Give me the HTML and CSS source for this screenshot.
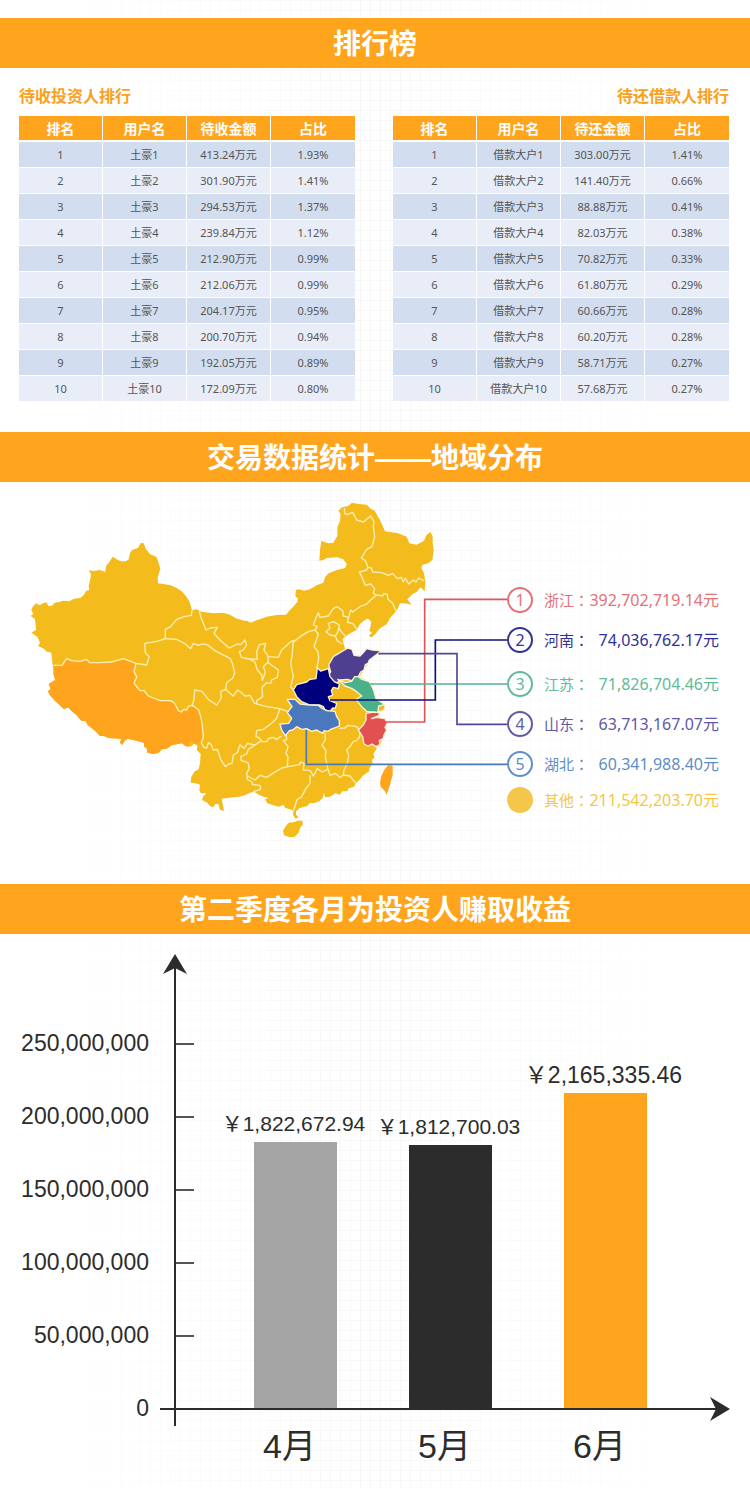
FILE: index.html
```html
<!DOCTYPE html>
<html lang="zh-CN">
<head>
<meta charset="utf-8">
<meta name="viewport" content="width=device-width, initial-scale=1">
<title>排行榜</title>
<link rel="stylesheet" href="styles.css">
</head>
<body>
<main class="report">
  <h2 class="banner">排行榜</h2>
  <section class="rankings">
    <div class="ranking">
      <h3 class="ranking-title" id="investors">待收投资人排行</h3>
      <table class="rank-table" aria-labelledby="investors">
        <thead><tr><th>排名</th><th>用户名</th><th>待收金额</th><th>占比</th></tr></thead>
        <tbody>
          <tr><td>1</td><td>土豪1</td><td>413.24万元</td><td>1.93%</td></tr>
          <tr><td>2</td><td>土豪2</td><td>301.90万元</td><td>1.41%</td></tr>
          <tr><td>3</td><td>土豪3</td><td>294.53万元</td><td>1.37%</td></tr>
          <tr><td>4</td><td>土豪4</td><td>239.84万元</td><td>1.12%</td></tr>
          <tr><td>5</td><td>土豪5</td><td>212.90万元</td><td>0.99%</td></tr>
          <tr><td>6</td><td>土豪6</td><td>212.06万元</td><td>0.99%</td></tr>
          <tr><td>7</td><td>土豪7</td><td>204.17万元</td><td>0.95%</td></tr>
          <tr><td>8</td><td>土豪8</td><td>200.70万元</td><td>0.94%</td></tr>
          <tr><td>9</td><td>土豪9</td><td>192.05万元</td><td>0.89%</td></tr>
          <tr><td>10</td><td>土豪10</td><td>172.09万元</td><td>0.80%</td></tr>
        </tbody>
      </table>
    </div>
    <div class="ranking">
      <h3 class="ranking-title ranking-title-end" id="borrowers">待还借款人排行</h3>
      <table class="rank-table" aria-labelledby="borrowers">
        <thead><tr><th>排名</th><th>用户名</th><th>待还金额</th><th>占比</th></tr></thead>
        <tbody>
          <tr><td>1</td><td>借款大户1</td><td>303.00万元</td><td>1.41%</td></tr>
          <tr><td>2</td><td>借款大户2</td><td>141.40万元</td><td>0.66%</td></tr>
          <tr><td>3</td><td>借款大户3</td><td>88.88万元</td><td>0.41%</td></tr>
          <tr><td>4</td><td>借款大户4</td><td>82.03万元</td><td>0.38%</td></tr>
          <tr><td>5</td><td>借款大户5</td><td>70.82万元</td><td>0.33%</td></tr>
          <tr><td>6</td><td>借款大户6</td><td>61.80万元</td><td>0.29%</td></tr>
          <tr><td>7</td><td>借款大户7</td><td>60.66万元</td><td>0.28%</td></tr>
          <tr><td>8</td><td>借款大户8</td><td>60.20万元</td><td>0.28%</td></tr>
          <tr><td>9</td><td>借款大户9</td><td>58.71万元</td><td>0.27%</td></tr>
          <tr><td>10</td><td>借款大户10</td><td>57.68万元</td><td>0.27%</td></tr>
        </tbody>
      </table>
    </div>
  </section>

  <h2 class="banner">交易数据统计<span class="dash">——</span>地域分布</h2>
  <section class="regions">
    <svg class="map" viewBox="0 0 1521 1080" role="img" aria-label="地域分布">
      <!-- mainland -->
      <path class="land" d="M92 378L100 372 94 360 98 350 108 340 120 346 128 340 140 337 145 348 156 347 164 338 178 336 190 332 208 334 220 327 242 323 252 314 258 303 268 300 266 288 272 262 273 252 266 241 280 243 300 240 316 246 318 228 328 216 338 200 350 208 362 214 378 214 386 208 390 190 396 180 414 174 422 160 430 158 438 178 450 192 470 202 476 220 481 236 473 262 474 280 490 282 512 286 530 294 545 304 558 318 568 334 576 360 590 358 604 365 640 370 668 368 690 374 708 385 735 393 741 392 752 398 772 390 800 380 830 375 858 374 868 362 880 350 892 335 894 326 886 318 888 300 896 298 912 302 930 298 950 286 970 278 976 260 986 250 1010 240 1036 234 1040 222 1030 208 1012 202 980 204 970 210 958 212 960 180 964 153 985 160 1000 158 1012 138 1012 112 1020 92 1022 72 1015 62 1026 52 1044 48 1056 38 1076 42 1100 44 1112 56 1124 62 1140 90 1155 124 1195 130 1220 140 1228 160 1250 164 1272 152 1280 134 1292 126 1298 140 1298 160 1301 180 1297 210 1285 220 1268 224 1264 234 1272 250 1276 276 1274 304 1262 292 1250 306 1238 312 1222 328 1234 344 1214 340 1200 340 1190 362 1170 384 1160 403 1140 415 1128 430 1116 442 1106 438 1116 428 1108 422 1112 408 1114 396 1108 388 1100 386 1090 394 1080 402 1070 420 1050 430 1036 440 1028 446 1030 460 1036 478 1056 478 1062 496 1085 498 1100 478 1120 490 1092 540 1078 560 1108 575 1128 626 1155 645 1150 662 1136 668 1138 676 1115 685 1150 690 1155 715 1150 735 1140 768 1128 768 1130 776 1120 792 1124 802 1116 810 1118 822 1108 834 1108 844 1090 856 1080 868 1068 880 1062 890 1046 895 1042 904 1026 904 1020 914 1006 910 990 920 975 922 972 908 968 924 958 934 940 940 930 938 922 948 900 954 888 964 888 974 896 982 886 986 879 974 880 962 870 958 856 954 850 944 836 950 820 946 802 940 795 928 806 924 790 920 780 916 762 905 750 908 735 916 718 920 700 922 682 924 665 926 668 942 672 962 660 960 655 942 646 942 640 952 630 948 622 938 606 930 610 918 620 910 602 910 598 900 600 884 586 880 572 878 574 860 584 844 596 838 600 820 602 792 590 780 592 770 586 758 572 770 545 760 515 766 500 776 485 778 476 788 460 792 442 788 440 774 432 770 432 758 415 754 400 750 384 746 376 750 366 765 360 758 364 746 325 744 312 738 300 738 285 722 272 712 262 704 258 694 244 692 230 676 214 662 205 652 192 658 182 648 166 634 150 616 144 604 152 596 146 582 166 570 160 552 164 540 158 526 154 488 138 484 132 476 114 468 120 458 112 440 94 428 108 420 106 396 104 386Z"/>
      <path class="land" d="M856 1010L866 998 884 996 892 992 908 992 908 1004 900 1014 896 1028 884 1040 870 1042 852 1036 849 1022Z"/>
      <path class="west" d="M160 526L186 526 200 506 215 512 240 514 260 508 268 518 300 518 335 516 370 506 408 520 402 545 410 560 402 580 420 602 432 602 445 618 480 632 512 632 524 640 535 662 544 666 552 658 560 660 564 650 576 650 580 645 596 660 602 680 606 700 610 740 600 756 586 764 578 752 568 756 566 772 556 768 545 760 515 766 500 776 485 778 476 788 460 792 442 788 440 774 432 770 432 758 415 754 400 750 384 746 376 750 366 765 360 758 364 746 325 744 312 738 300 738 285 722 272 712 262 704 258 694 244 692 230 676 214 662 205 652 192 658 182 648 166 634 150 616 144 604 152 596 146 582 166 570 160 552Z"/>
      <path class="west" d="M1165 825L1178 827 1178 855 1170 884 1160 914 1154 902 1142 890 1140 878 1144 858 1154 838Z"/>
      <!-- provincial borders -->
      <g class="borders">
        <path d="M160 526L186 526 200 506 215 512 240 514 260 508 268 518 300 518 335 516 370 506 408 520 440 525 448 500 436 488 434 460 470 454 496 446 496 418 512 410 530 388 552 380 574 376 576 360"/>
        <path d="M496 446L530 448 556 462 572 476 580 460 596 466 606 462 622 464 645 482 660 490 690 505 697 520 704 548 698 565 680 578 677 598 662 604 664 624 650 645 625 628 606 604 584 600 582 628 576 650"/>
        <path d="M408 520L402 545 410 560 402 580 420 602 432 602 445 618 480 632 512 632 524 640 535 662 544 666 552 658 560 660 564 650 576 645 596 660 602 680 606 700 610 740 604 758"/>
        <path d="M598 364L604 385 618 420 630 414 652 412 642 430 660 450 676 464 688 474 712 462 722 464 735 450 740 465 730 480 718 485 724 502 745 506 765 516 772 540 785 555 787 572 796 545 790 530 805 515 804 498 792 480 797 460 778 464 770 485 772 508 735 506"/>
        <path d="M677 598L690 610 700 618 712 600 722 606 735 618 750 616 764 640 800 650 838 656 862 664"/>
        <path d="M805 518L835 540 832 562 815 570 812 580 800 578 786 592 788 620 770 632 770 642"/>
        <path d="M804 500L835 502 845 480 872 455 885 450M872 455L880 452 876 500 872 520 880 560 872 590 880 600"/>
        <path d="M882 455L900 440 925 425 945 420 952 410 940 405 945 390 955 368 960 382 985 378 1000 355 1012 350 1028 362 1030 378 1046 382 1052 360 1058 366 1080 350 1100 342 1112 330 1130 315 1120 310 1124 296 1112 282 1096 286 1086 262 1078 246 1100 240 1104 232"/>
        <path d="M945 420L955 432 942 470 954 485 956 505 950 535M1046 382L1042 396 1060 402 1070 418"/>
        <path d="M985 400L1000 395 1018 405 1014 425 1006 438 990 435 978 425 990 415ZM1016 412L1024 425 1036 438M1006 438L1012 452 1026 462"/>
        <path d="M1033 54L1034 70 1042 74 1058 67 1070 90 1090 96 1100 88 1112 78 1122 95 1120 110 1124 140 1116 170 1100 178 1084 204 1096 212 1104 232 1114 234 1118 246 1145 248 1165 256 1178 250 1192 266 1204 262 1210 276 1216 264 1226 282 1240 270 1248 276 1256 264 1272 272"/>
        <path d="M1130 315L1148 318 1152 310 1162 314 1164 328 1178 340 1188 364"/>
        <path d="M604 758L612 772 620 774 625 758 634 764 640 780 652 778 662 808 676 830 686 822 696 820 700 795 712 788 720 765 732 775 742 760 765 765 785 752 775 742 768 740 770 722 790 718 808 705 828 688 840 656"/>
        <path d="M785 755L800 755 806 745 820 742 830 748 844 738M765 765L745 778 740 792 722 800 724 812 744 818 748 835 740 850 742 868 756 876 758 884 780 886 782 898 760 905"/>
        <path d="M742 858L765 870 780 856 800 862 822 848 845 834 864 830 898 824 902 816 912 820 910 840 930 842M858 728L860 748 850 752 864 770 858 790 864 800 862 828"/>
        <path d="M975 728L976 750 966 765 978 782 976 800 984 838 966 846 952 836 940 858 930 840M930 856L930 880 918 895 905 920 890 930 886 946 880 962"/>
        <path d="M984 838L990 856 1006 850 1020 862 1030 855 1050 858 1068 880M1030 855L1032 840 1042 820 1046 796 1040 780 1054 765 1058 756 1072 750 1080 738 1078 720M1018 715L1035 714 1044 706 1070 710 1078 720"/>
      </g>
      <!-- highlighted provinces -->
      <path class="area shandong" d="M1036 478L1044 474 1056 478 1062 496 1080 498 1088 490 1100 476 1118 480 1142 482 1132 492 1108 510 1104 520 1096 524 1092 540 1082 546 1075 560 1055 572 1042 568 1020 570 1012 578 1000 576 982 562 992 545 986 525 1000 500 1020 488Z"/>
      <path class="area henan" d="M952 533L962 543 985 536 990 560 1004 576 1018 582 1015 596 1000 592 994 602 998 616 985 620 990 632 1010 640 1006 655 998 654 990 664 975 660 970 650 960 645 930 645 905 635 890 620 880 600 890 584 920 576 930 568 948 566Z"/>
      <path class="area jiangsu" d="M1013 568L1035 578 1055 574 1064 560 1075 560 1084 567 1108 575 1120 598 1128 626 1152 642 1148 655 1130 668 1100 664 1085 650 1068 628 1085 618 1070 605 1055 595 1035 588Z"/>
      <path class="area hubei" d="M861 628L885 628 900 642 930 645 955 646 964 654 980 662 1005 664 1010 680 1018 692 1018 708 992 718 985 724 972 722 968 730 950 720 935 724 920 716 905 718 890 710 878 720 868 722 856 737 845 720 840 702 866 700 875 685 862 668 876 650Z"/>
      <path class="area zhejiang" d="M1098 670L1120 666 1137 668 1138 676 1115 686 1130 682 1155 686 1162 700 1155 712 1160 720 1152 735 1150 745 1138 752 1140 764 1128 770 1116 762 1104 768 1092 762 1088 740 1075 720 1090 705 1098 690Z"/>
      <path class="area shanghai" d="M1136 648L1154 644 1155 656 1146 664 1134 664Z"/>
      <!-- leader lines -->
      <g class="leaders">
        <path class="red" d="M1150 696H1274V328H1521"/>
        <path class="navy" d="M990 630H1306V450H1521"/>
        <path class="green" d="M1110 582H1521"/>
        <path class="violet" d="M1135 491H1371V703H1521"/>
        <path class="blue" d="M919 720V823H1521"/>
      </g>
    </svg>
    <ul class="legend">
      <li class="entry c1"><span class="badge">1</span><span>浙江<span class="colon" lang="zh-Hant">：</span></span><span class="amount">392,702,719.14元</span></li>
      <li class="entry c2"><span class="badge">2</span><span>河南<span class="colon" lang="zh-Hant">：</span></span><span class="amount">74,036,762.17元</span></li>
      <li class="entry c3"><span class="badge">3</span><span>江苏<span class="colon" lang="zh-Hant">：</span></span><span class="amount">71,826,704.46元</span></li>
      <li class="entry c4"><span class="badge">4</span><span>山东<span class="colon" lang="zh-Hant">：</span></span><span class="amount">63,713,167.07元</span></li>
      <li class="entry c5"><span class="badge">5</span><span>湖北<span class="colon" lang="zh-Hant">：</span></span><span class="amount">60,341,988.40元</span></li>
      <li class="entry c6"><span class="badge badge-solid"></span><span>其他<span class="colon" lang="zh-Hant">：</span></span><span class="amount">211,542,203.70元</span></li>
    </ul>
  </section>

  <h2 class="banner">第二季度各月为投资人赚取收益</h2>
  <section class="chart">
    <ul class="scale">
      <li class="step"><span>250,000,000</span><i class="tick"></i></li>
      <li class="step"><span>200,000,000</span><i class="tick"></i></li>
      <li class="step"><span>150,000,000</span><i class="tick"></i></li>
      <li class="step"><span>100,000,000</span><i class="tick"></i></li>
      <li class="step"><span>50,000,000</span><i class="tick"></i></li>
      <li class="step"><span>0</span></li>
    </ul>
    <div class="plot">
      <div class="bars">
        <div class="column"><span class="value">￥1,822,672.94</span><div class="bar gray" style="height:267px"></div></div>
        <div class="column"><span class="value">￥1,812,700.03</span><div class="bar dark" style="height:264px"></div></div>
        <div class="column"><span class="value value-large">￥2,165,335.46</span><div class="bar orange" style="height:316px"></div></div>
      </div>
      <div class="months"><span>4月</span><span>5月</span><span>6月</span></div>
    </div>
    <div class="axis axis-y"><svg class="arrow-up" viewBox="0 0 24 20"><path d="M12 0L24 20 12 14 0 20Z"/></svg></div>
    <div class="axis axis-x"><svg class="arrow-right" viewBox="0 0 20 24"><path d="M20 12L0 24 6 12 0 0Z"/></svg></div>
  </section>
</main>
</body>
</html>
```

FILE: styles.css
```css
* { box-sizing: border-box; }

body {
  margin: 0;
  background: #fff;
  color: #2c2c2c;
  font-family: "Noto Sans", "Noto Sans CJK SC", sans-serif;
}

h2, h3, ul { margin: 0; padding: 0; }
ul { list-style: none; }

.report {
  padding-top: 18px;
  background:
    linear-gradient(90deg, #fff 3%, transparent 50%, #fff 95%),
    repeating-linear-gradient(90deg, #f7f7f7 0 1px, transparent 1px 10px),
    repeating-linear-gradient(#f7f7f7 0 1px, transparent 1px 10px);
}

.banner {
  padding-bottom: 2px;
  background: #ffa41d;
  color: #fff;
  font: bold 28px/48px "Noto Sans CJK SC", sans-serif;
  text-align: center;
}
.dash {
  font-family: "Liberation Sans", sans-serif;
  line-height: 1;
}

.rankings {
  display: grid;
  grid-template-columns: 1fr 1fr;
  gap: 38px;
  max-width: 750px;
  margin: 0 auto;
  padding: 16px 21px 30px 19px;
}

.ranking-title {
  margin-bottom: 10px;
  color: #f9a11e;
  font: bold 16px/22px "Noto Sans CJK SC", sans-serif;
}
.ranking-title-end { text-align: right; }

.rank-table {
  width: 100%;
  table-layout: fixed;
  border-collapse: separate;
  border-spacing: 0;
  text-align: center;
}
.rank-table th,
.rank-table td {
  height: 26px;
  padding: 0;
  border-right: 1px solid #fff;
  border-bottom: 1px solid #fff;
}
.rank-table th:last-child,
.rank-table td:last-child { border-right: 0; }
.rank-table th {
  border-bottom-width: 2px;
  background: #ffa41d;
  color: #fff;
  font: bold 14px/24px "Noto Sans CJK SC", sans-serif;
}
.rank-table td {
  background: #e9edf7;
  color: #555;
  font-size: 11px;
  line-height: 24px;
}
.rank-table tr:nth-child(odd) td { background: #d2deef; }

.regions {
  display: flex;
  justify-content: center;
  align-items: flex-start;
  max-width: 750px;
  margin: 0 auto;
  padding: 8px 31px 34px 0;
}
.map { width: 507px; flex: none; display: block; }
.land { fill: #f3bc1c; }
.west { fill: #ffa41d; }
.borders { fill: none; stroke: #fcefb4; stroke-width: 4; stroke-linejoin: round; }
.area { stroke: #fdf3cf; stroke-width: 4; stroke-linejoin: round; }
.shandong { fill: #4f3f91; }
.henan { fill: #00007f; }
.jiangsu { fill: #49b28a; }
.hubei { fill: #4b78bd; }
.zhejiang { fill: #e35052; }
.shanghai { fill: #f3bc1c; }
.leaders { fill: none; stroke-width: 5; }
.red { stroke: #df5558; }
.navy { stroke: #10107a; }
.green { stroke: #4fb592; }
.violet { stroke: #54469a; }
.blue { stroke: #4a79b9; }

.legend {
  flex: 1;
  display: grid;
  grid-template-rows: 40px 44px 40px 40px 36px 26px;
  padding-top: 97px;
}
.entry {
  display: grid;
  grid-template-columns: 26px 45px 1fr;
  column-gap: 11px;
  height: 26px;
  font-size: 15px;
  line-height: 26px;
  white-space: nowrap;
}
.amount {
  display: flex;
  justify-content: flex-end;
  margin-left: -11px;
  font-size: 16px;
}
.colon { font-family: "Noto Sans CJK TC", sans-serif; }
.badge {
  height: 26px;
  border: 2px solid currentColor;
  border-radius: 50%;
  font-size: 16px;
  line-height: 22px;
  text-align: center;
}
.badge-solid { background: currentColor; }
.c1 { color: #e27275; }
.c2 { color: #30309a; }
.c3 { color: #5fbb98; }
.c4 { color: #6259a5; }
.c5 { color: #5f8ec6; }
.c6 { color: #f4c64a; }

.chart {
  position: relative;
  display: grid;
  grid-template-columns: 194px 1fr;
  max-width: 750px;
  margin: 0 auto;
  padding-right: 21px;
}
.scale {
  padding-top: 73px;
  font-family: "Liberation Sans", sans-serif;
  font-size: 23px;
}
.step {
  display: grid;
  grid-template-columns: 149px 18px;
  column-gap: 27px;
  align-items: center;
  height: 73px;
  text-align: right;
}
.tick { height: 2px; background: #555; }
.bars, .months {
  display: grid;
  grid-template-columns: repeat(3, 155px);
}
.bars { height: 475px; padding-left: 24px; }
.column {
  display: flex;
  flex-direction: column;
  align-items: center;
  justify-content: flex-end;
}
.value {
  padding-right: 4px;
  font: 21px/36px "Liberation Sans", "Noto Sans CJK SC", sans-serif;
  white-space: nowrap;
}
.value-large { font-size: 23px; }
.bar { width: 83px; }
.gray { background: #a5a5a5; }
.dark { background: #2c2c2c; }
.orange { background: #ffa41d; }
.months {
  padding: 10px 0 15px 18px;
  font: 34px/54px "Liberation Sans", "Noto Sans CJK SC", sans-serif;
  text-align: center;
}
.axis { position: absolute; background: #2c2c2c; }
.axis svg { position: absolute; display: block; fill: #2c2c2c; }
.axis-y { left: 174px; top: 24px; width: 2px; height: 468px; }
.axis-x { left: 160px; right: 24px; top: 474px; height: 2px; }
.arrow-up { width: 24px; top: -4px; left: -11px; }
.arrow-right { width: 20px; top: -11px; right: -4px; }
```
